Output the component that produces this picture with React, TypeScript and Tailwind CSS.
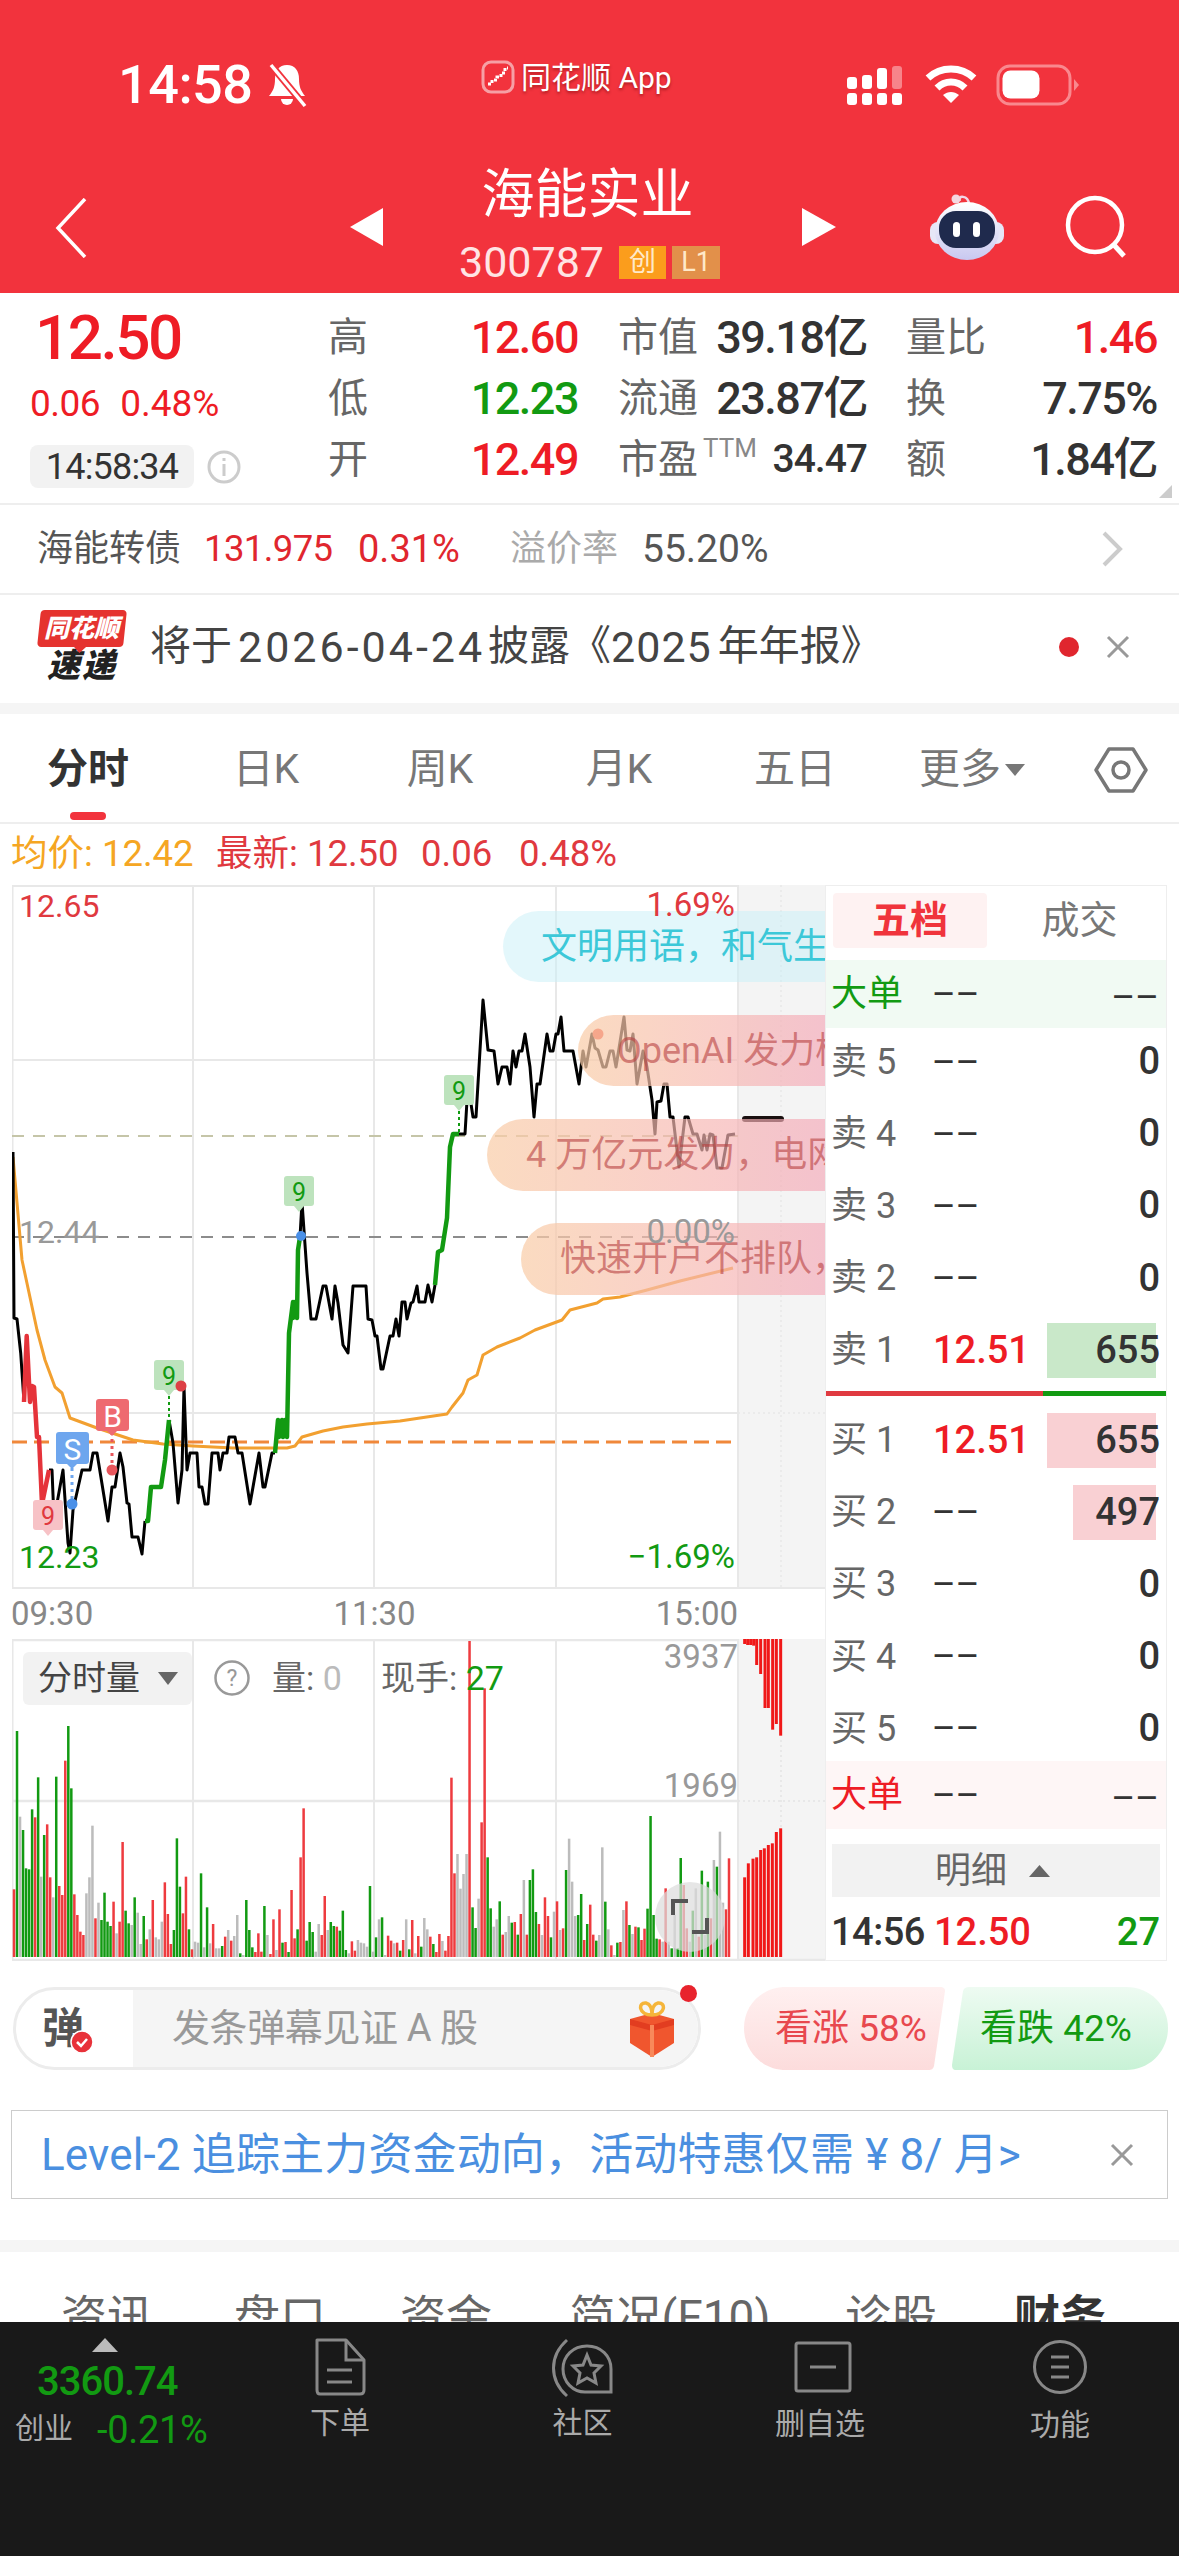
import React from "react";

const toPts = (a: number[]) => a.join(" ");

const LINE_BLACK: number[][] = [
  [13,1152,14,1318,17,1319,20.7,1353,24,1402],
  [49,1470,52,1470,54,1520,63,1470,68,1543,70,1553,73,1510,82,1470,90,1470,93,1453,97,1453,108,1521,112,1487,115,1487,120,1453,123,1467,127,1503,129,1504,132,1537,138,1537,142,1554,145,1521],
  [169,1420,173,1443,178,1503,182,1470,184,1387,187,1470,190,1453,197,1453,199,1487,202,1487,205,1504,208,1504,212,1453,218,1453,220,1470,223,1453,227,1453,229,1437,235,1437,238,1453,242,1453,250,1504,259,1453,263,1487,265,1487,272,1453,275,1453],
  [300,1237,302,1202,307,1273,311,1319,316,1319,323,1286,326,1286,332,1319,335,1286,338,1303,343,1345,348,1353,353,1286,366,1286,368,1319,372,1320,375,1336,377,1336,381,1369,383,1369,390,1336,393,1336,396,1319,399,1336,402,1302,405,1302,407,1319,411,1303,413,1302,417,1286,419,1302,420,1302,425,1302,428,1285,432,1302,435,1285],
  [459,1134,465,1134,468,1084,473,1117,476,1117,483,1000,488,1050,494,1051,498,1084,502,1067,507,1067,510,1084,513,1051,516,1067,519,1051,522,1051,525,1034,530,1067,534,1117,537,1084,540,1084,547,1034,550,1051,553,1051,556,1034,558,1034,561,1017,564,1051,573,1051,579,1084,583,1051,586,1067,592,1034,595,1048,598,1050,603,1067,606,1067,610,1051,613,1051,616,1067,624,1017,627,1050,630,1051,633,1034,637,1084,643,1051,647,1067,652,1100,655,1134,657,1102,661,1101,664,1084,667,1084,670,1117,673,1117,679,1167,685,1117,688,1117,693,1134,697,1134,702,1150,704,1135,707,1150,710,1134,713,1135,717,1168,722,1168,728,1135,735,1134],
];
const LINE_RED: number[][] = [[24,1402,26.7,1336,30,1402,32,1386,34,1387,37,1437,39,1437,42,1504,49,1470]];
const LINE_GREEN: number[][] = [
  [145,1521,148,1521,151,1487,161,1487,165,1460,169,1420],
  [275,1453,278,1420,279,1437,282,1420,283,1437,285,1420,287,1437,289,1333,293,1302,293,1318,295,1302,297,1318,298,1250,300,1237],
  [435,1285,438,1252,442,1250,447,1218,450,1147,453,1134,459,1134],
];
const AVG = [13,1157,22,1260,37,1330,45,1360,55,1387,62,1393,70,1418,97,1428,133,1440,163,1444,193,1446,233,1448,287,1448,295,1446,302,1437,323,1431,343,1427,367,1424,400,1421,420,1418,447,1414,452,1407,463,1393,468,1380,477,1375,483,1355,497,1347,520,1338,535,1330,562,1320,570,1310,597,1303,603,1299,620,1297,647,1290,680,1281,733,1268];

const VOL = "r748 g273 a530 g570 g685 g688 g508 r532 g412 a710 g585 r553 r712 a772 g410 r738 r765 r362 g258 g445 r763 r825 r875 r885 a760 a712 a557 r835 a788 g840 g758 g845 g858 r785 a880 r845 r606 g812 g850 a855 g772 a818 a912 g828 r898 a868 r780 a892 a898 a845 r727 r822 r912 g870 g595 g740 r820 r710 g868 r928 a905 a908 g700 a922 g802 a910 r852 a925 a925 g918 r890 a870 r902 a888 a825 g940 a945 g780 g870 g922 r936 r880 r935 g798 a885 r942 r838 a930 r808 g908 r906 g936 r750 r895 g868 r652 r505 g902 g846 g876 a935 a852 r885 r768 a870 g846 g858 r860 g872 g812 g930 a940 r904 r932 a900 a908 a910 a920 g738 a935 g892 a838 g832 a945 r887 r902 a910 r908 g932 r900 a838 g928 r840 a940 r888 g920 a834 a868 r890 g912 r936 r882 a903 r932 r888 r413 r700 a642 a746 a702 a642 r3 g802 g864 a776 r547 r145 g652 g805 a860 a838 g784 r884 a876 a828 g848 r846 g884 r822 a720 r884 g720 g688 g816 r852 a885 r772 r828 g892 a815 r784 a870 r865 g690 a596 a725 a828 g825 g762 r900 g852 r794 r884 g902 a885 a622 g785 a868 r916 a945 g908 r906 a810 r784 g855 a882 r860 g862 r900 r866 g806 g528 g825 g896 r898 a905 r745 a905 g925 a825 g925 g654 r735 r865 a905 g812 a745 r890 g692 a885 g725 r835 a660 g680 a575 a788 r808 r655".split(" ");
const VOLC: Record<string, string> = { r: "#ee3b3f", g: "#129a12", a: "#bcbcbc" };

const TAGS: [number, number, string, string][] = [
  [154, 1360, "#bde3bd", "#129a12"],
  [284, 1176, "#bde3bd", "#129a12"],
  [444, 1075, "#bde3bd", "#129a12"],
  [33, 1500, "#f7c2c6", "#e0393f"],
];

function PriceChart() {
  return (
    <svg viewBox="12 885 813 704" className="block w-[813px] h-[704px]">
      <rect x="738" y="885" width="87" height="704" fill="#f4f4f4" />
      <g stroke="#e8e8e8" strokeWidth="2" fill="none">
        <path d="M12.5 885V1589M193 885V1589M374 885V1589M556 885V1589M738 885V1589" />
        <path d="M12 886H738M12 1060H738M12 1413H738M12 1588H825" />
      </g>
      <path d="M781 885V1589" stroke="#e8e8e8" strokeWidth="1.5" strokeDasharray="2 3" />
      <path d="M738 1413H825" stroke="#e8e8e8" strokeWidth="1.5" strokeDasharray="2 3" />
      <path d="M12 1136H738" stroke="#c5c5a8" strokeWidth="2" strokeDasharray="12 9" />
      <path d="M12 1237H738" stroke="#8c8c8c" strokeWidth="2" strokeDasharray="12 9" />
      <path d="M12 1442H738" stroke="#f0883a" strokeWidth="3" strokeDasharray="15 7" />
      <polyline points={toPts(AVG)} fill="none" stroke="#f2a030" strokeWidth="3" strokeLinejoin="round" />
      {LINE_BLACK.map((l, i) => (
        <polyline key={i} points={toPts(l)} fill="none" stroke="#000" strokeWidth="3" strokeLinejoin="round" />
      ))}
      {LINE_RED.map((l, i) => (
        <polyline key={i} points={toPts(l)} fill="none" stroke="#e5333a" strokeWidth="4.5" strokeLinejoin="round" />
      ))}
      {LINE_GREEN.map((l, i) => (
        <polyline key={i} points={toPts(l)} fill="none" stroke="#129a12" strokeWidth="4.5" strokeLinejoin="round" />
      ))}
      <path d="M745 1119H781" stroke="#1a1010" strokeWidth="6" strokeLinecap="round" />
      {TAGS.map(([x, y, bg, fg], i) => (
        <g key={i}>
          <rect x={x} y={y} width="30" height="30" rx="3" fill={bg} />
          <path d={`M${x + 10} ${y + 30}L${x + 15} ${y + 36}L${x + 20} ${y + 30}Z`} fill={bg} />
          <text x={x + 15} y={y + 25} textAnchor="middle" fontSize="25" fontFamily="Roboto" fill={fg}>9</text>
        </g>
      ))}
      <path d="M169 1396V1420" stroke="#129a12" strokeWidth="2" strokeDasharray="3 3" />
      <path d="M459 1111V1133" stroke="#129a12" strokeWidth="2" strokeDasharray="3 3" />
      <path d="M72 1468V1500" stroke="#6ea6ee" strokeWidth="3" strokeDasharray="3 4" />
      <path d="M112 1432V1466" stroke="#e8565c" strokeWidth="3" strokeDasharray="3 4" />
      <circle cx="72" cy="1504" r="5.5" fill="#4a90e8" />
      <circle cx="112" cy="1470" r="5.5" fill="#e8565c" />
      <circle cx="181" cy="1386" r="5.5" fill="#dd3f45" />
      <circle cx="301" cy="1236" r="5" fill="#4a90e8" />
      <circle cx="598" cy="1034" r="5.5" fill="#ef4b3e" />
      <rect x="96" y="1399" width="33" height="32" rx="3" fill="#ee6a70" />
      <path d="M107 1431L112 1436L117 1431Z" fill="#ee6a70" />
      <text x="112.5" y="1427" textAnchor="middle" fontSize="30" fontFamily="Roboto" fill="#fff">B</text>
      <rect x="56" y="1432" width="33" height="32" rx="3" fill="#6ea6ee" />
      <path d="M67 1464L72 1469L77 1464Z" fill="#6ea6ee" />
      <text x="72.5" y="1460" textAnchor="middle" fontSize="30" fontFamily="Roboto" fill="#fff">S</text>
    </svg>
  );
}

function VolumeChart() {
  const topBars: [number, number][] = [[1109,15],[1118,18],[1127,18],[1136,20],[1145,78],[1157,105],[1170,207],[1180,207],[1193,272],[1204,255],[1217,290]];
  const botBars: [number, number][] = [[1109,712],[1120,670],[1134,656],[1145,652],[1157,630],[1168,625],[1180,615],[1192,610],[1204,576],[1217,565]];
  const pitch = (729 - 14) / (VOL.length - 1);
  return (
    <svg viewBox="12 1639 813 322" className="block w-[813px] h-[322px]">
      <rect x="738" y="1639" width="87" height="322" fill="#f4f4f4" />
      <g stroke="#e8e8e8" strokeWidth="2" fill="none">
        <path d="M12.5 1639V1961M193 1639V1961M374 1639V1961M556 1639V1961M738 1639V1961" />
        <path d="M12 1640H738M12 1801H738M12 1960H825" strokeWidth="2.5" />
      </g>
      <path d="M738 1801H825M781 1740V1950" stroke="#e4e4e4" strokeWidth="1.5" strokeDasharray="2 3" />
      {VOL.map((v, i) => {
        const y = 1640 + Number(v.slice(1)) / 3;
        return <rect key={i} x={14 + i * pitch - 1.25} y={y} width="2.5" height={1957 - y} fill={VOLC[v[0]]} />;
      })}
      {topBars.map(([x, h], i) => (
        <rect key={i} x={375 + x / 3 - 1.5} y="1639" width="3" height={h / 3} fill="#f01818" />
      ))}
      {botBars.map(([x, t], i) => (
        <rect key={i} x={375 + x / 3 - 1.5} y={1640 + t / 3} width="3" height={1957 - 1640 - t / 3} fill="#f01818" />
      ))}
      <circle cx="690" cy="1917" r="35" fill="#dcdcdc" fillOpacity="0.72" />
      <path d="M673 1915V1901H688M692 1932H707V1918" fill="none" stroke="#555" strokeWidth="4" />
    </svg>
  );
}

function Pill({ left, top, height, pad, cls, children }: { left: string; top: string; height: string; pad: string; cls: string; children: React.ReactNode }) {
  return (
    <div className={`absolute right-0 flex items-center whitespace-nowrap overflow-hidden rounded-l-full text-[36px] ${left} ${top} ${height} ${pad} ${cls}`}>
      {children}
    </div>
  );
}

const PINK = "bg-gradient-to-r from-[#f9cda8b8] to-[#f4a8b8a8] text-[#b8404099]";

function PriceLabels() {
  return (
    <>
      <Pill left="left-[491px]" top="top-[26px]" height="h-[71px]" pad="pl-[38px]" cls="bg-[#c8f0f880] text-[#3cc8d8]">文明用语，和气生活</Pill>
      <Pill left="left-[566px]" top="top-[130px]" height="h-[71px]" pad="pl-[39px]" cls={PINK}>OpenAI 发力榜单</Pill>
      <Pill left="left-[475px]" top="top-[234px]" height="h-[72px]" pad="pl-[39px]" cls={PINK}>4 万亿元发力，电网投资</Pill>
      <Pill left="left-[509px]" top="top-[338px]" height="h-[72px]" pad="pl-[39px]" cls={PINK}>快速开户不排队，</Pill>
      <span className="absolute left-[7px] top-[1px] leading-[40px] text-[32px] text-[#e0393f]">12.65</span>
      <span className="absolute right-[90px] top-[0px] leading-[40px] text-[33px] text-[#e0393f]">1.69%</span>
      <span className="absolute left-[7px] top-[327px] leading-[40px] text-[32px] text-[#999]">12.44</span>
      <span className="absolute right-[90px] top-[327px] leading-[40px] text-[33px] text-[#999]">0.00%</span>
      <span className="absolute left-[7px] top-[652px] leading-[40px] text-[32px] text-[#129a12]">12.23</span>
      <span className="absolute right-[90px] top-[652px] leading-[40px] text-[33px] text-[#129a12]">−1.69%</span>
    </>
  );
}

function Dash() {
  return <span className="text-[27px] font-medium text-[#333] tracking-[3px]">——</span>;
}

function BookRow({ label, price, value, bar, color }: { label: string; price: string; value: string; bar?: string; color?: string }) {
  return (
    <div className="flex items-center h-[72.1px] pl-[5px] pr-[6px] text-[36px]">
      <span className="w-[102px] text-[#666] whitespace-pre">{label}</span>
      {price === "--" ? <Dash /> : <span className="text-[38px] font-medium text-[#ee1c25]">{price}</span>}
      <span className="relative ml-auto text-[38px] text-[#333] font-medium z-0">
        {bar ? <span className={`absolute -z-10 top-[1px] bottom-[1px] right-[4px] ${bar} ${color}`} /> : null}
        {value}
      </span>
    </div>
  );
}

function BigOrder({ color, bg, cls }: { color: string; bg: string; cls: string }) {
  return (
    <div className={`flex items-center pl-[5px] pr-[6px] text-[36px] ${bg} ${cls}`}>
      <span className={`w-[102px] ${color}`}>大单</span>
      <Dash />
      <span className="ml-auto"><Dash /></span>
    </div>
  );
}

function OrderBook() {
  return (
    <div className="w-[342px] h-[1076px] border border-[#eee] flex flex-col">
      <div className="flex h-[74px] pl-[7px] pt-[7px]">
        <div className="w-[154px] h-[55px] bg-[#fef2f2] rounded-[4px] flex items-center justify-center text-[38px] font-bold text-[#f0343c]">五档</div>
        <div className="flex-1 h-[55px] flex items-center justify-center text-[38px] text-[#777] pl-[6px]">成交</div>
      </div>
      <BigOrder color="text-[#129a12]" bg="bg-[#f1faf3]" cls="h-[68px]" />
      <div className="-mt-[2px]">
        <BookRow label="卖 5" price="--" value="0" />
        <BookRow label="卖 4" price="--" value="0" />
        <BookRow label="卖 3" price="--" value="0" />
        <BookRow label="卖 2" price="--" value="0" />
        <BookRow label="卖 1" price="12.51" value="655" bar="w-[109px]" color="bg-[#c9e8c9]" />
      </div>
      <div className="flex h-[5px] mt-[5px] mb-[8px]">
        <div className="w-[217px] bg-[#e03a40]" />
        <div className="flex-1 bg-[#129a12]" />
      </div>
      <div>
        <BookRow label="买 1" price="12.51" value="655" bar="w-[109px]" color="bg-[#f9d0d3]" />
        <BookRow label="买 2" price="--" value="497" bar="w-[83px]" color="bg-[#f9d0d3]" />
        <BookRow label="买 3" price="--" value="0" />
        <BookRow label="买 4" price="--" value="0" />
        <BookRow label="买 5" price="--" value="0" />
      </div>
      <BigOrder color="text-[#ee1c25]" bg="bg-[#fef6f6]" cls="h-[68px] -mt-[3.5px]" />
      <div className="mx-[6px] mt-[15px] h-[53px] bg-[#f2f2f2] flex items-center text-[36px] text-[#666]">
        <span className="ml-[103px]">明细</span>
        <svg className="ml-[22px]" width="21" height="12" viewBox="0 0 21 12"><path d="M10.5 0L21 12H0Z" fill="#666" /></svg>
      </div>
      <div className="flex items-center h-[63px] pt-[8px] pl-[5px] pr-[6px] text-[38px] font-medium">
        <span className="w-[103px] text-[#333] tracking-[-0.5px]">14:56</span>
        <span className="text-[#ee1c25]">12.50</span>
        <span className="ml-auto text-[#129a12]">27</span>
      </div>
    </div>
  );
}

function Cell({ label, value, color, w, ml }: { label: React.ReactNode; value: string; color: string; w: string; ml: string }) {
  return (
    <div className={`flex items-center justify-between ${w} ${ml}`}>
      <span className="text-[40px] text-[#666] whitespace-nowrap">{label}</span>
      <span className={`text-[45px] font-medium tracking-[-1.5px] whitespace-nowrap ${color}`}>{value}</span>
    </div>
  );
}

function QuoteRow({ a, b, c }: { a: [string, string, string]; b: [React.ReactNode, string]; c: [string, string, string] }) {
  return (
    <div className="flex h-[61px] items-center">
      <Cell label={a[0]} value={a[1]} color={a[2]} w="w-[250px]" ml="" />
      <Cell label={b[0]} value={b[1]} color="text-[#333]" w="w-[249px]" ml="ml-[40px]" />
      <Cell label={c[0]} value={c[1]} color={c[2]} w="w-[251px]" ml="ml-[39px]" />
    </div>
  );
}

function NavIcon({ children, cell }: { children: React.ReactNode; cell: string }) {
  return <div className={`flex flex-col items-center ${cell}`}>{children}</div>;
}

export default function App() {
  return (
    <div className="relative w-[1179px] h-[2556px] overflow-hidden flex flex-col bg-white font-[Roboto,'Noto_Sans_CJK_SC',sans-serif]">
      {/* Red header */}
      <div className="h-[293px] shrink-0 bg-[#f2333d] text-white">
        <div className="flex items-center h-[170px]">
          <span className="ml-[118px] w-[147px] text-[54px] font-medium leading-none tracking-[-0.5px]">14:58</span>
          <svg width="44" height="46" viewBox="0 0 44 46">
            <path d="M22 3c-8 0-12 6-12 14 0 8-2 12-6 17h36c-4-5-6-9-6-17 0-8-4-14-12-14z" fill="#fff" />
            <path d="M16 37a6 6 0 0 0 12 0z" fill="#fff" />
            <path d="M6 3L40 44" stroke="#f2333d" strokeWidth="7" />
            <path d="M6 3L40 44" stroke="#fff" strokeWidth="3.5" />
          </svg>
          <svg className="ml-[172px] -mt-[16px]" width="34" height="34" viewBox="0 0 34 34">
            <rect x="2" y="2" width="30" height="30" rx="8" fill="#f2333d" stroke="#f6a0a5" strokeWidth="3" />
            <path d="M7 24h4v-4h5v-3h4v-4h4v-5h3" fill="none" stroke="#fff" strokeWidth="3" strokeDasharray="3 2" />
          </svg>
          <span className="ml-[6px] -mt-[16px] text-[30px] text-[#fff] [text-shadow:0_2px_3px_rgba(90,0,0,0.45)] whitespace-nowrap">同花顺 App</span>
          <svg className="ml-[175px]" width="62" height="42" viewBox="0 0 62 42" fill="#fff">
            <rect x="0" y="13" width="10" height="12" rx="3" />
            <rect x="15" y="11" width="10" height="14" rx="3" />
            <rect x="30" y="4" width="10" height="21" rx="3" />
            <rect x="45" y="2" width="10" height="23" rx="3" fillOpacity="0.4" />
            <rect x="0" y="29" width="10" height="12" rx="3" />
            <rect x="15" y="29" width="10" height="12" rx="3" />
            <rect x="30" y="29" width="10" height="12" rx="3" />
            <rect x="45" y="29" width="10" height="12" rx="3" />
          </svg>
          <svg className="ml-[16px]" width="52" height="40" viewBox="0 0 52 40" fill="none" stroke="#fff" strokeWidth="7">
            <path d="M3 13C16 1 36 1 49 13" />
            <path d="M12 23C20 15 32 15 40 23" />
            <path d="M26 38L18 30C23 26 29 26 34 30Z" fill="#fff" stroke="none" />
          </svg>
          <svg className="ml-[19px]" width="84" height="42" viewBox="0 0 84 42">
            <rect x="2" y="2" width="72" height="38" rx="12" fill="none" stroke="#f9888e" strokeWidth="3" />
            <rect x="6.5" y="6.5" width="37" height="28" rx="8" fill="#fff" />
            <path d="M78 15L83 21L78 27Z" fill="#f9888e" />
          </svg>
        </div>
        <div className="flex items-start h-[123px]">
          <svg className="ml-[55px] mt-[28px]" width="32" height="60" viewBox="0 0 32 60" fill="none" stroke="#fff" strokeWidth="3.5"><path d="M30 1L3 30L30 59" /></svg>
          <svg className="ml-[263px] mt-[38px]" width="33" height="38" viewBox="0 0 33 38"><path d="M33 0V38L0 19Z" fill="#fff" /></svg>
          <div className="ml-[6px] w-[401px] flex flex-col items-center">
            <div className="h-[50px] leading-[50px] text-[53px] -ml-[4px]">海能实业</div>
            <div className="mt-[22px] h-[40px] flex items-center">
              <span className="text-[43px] text-[#ffe4e4]">300787</span>
              <span className="ml-[15px] w-[47px] h-[33px] bg-[#fb9d1c] flex items-center justify-center text-[27px] text-[#ffe9c9]">创</span>
              <span className="ml-[6px] w-[48px] h-[33px] bg-[#e2904a] flex items-center justify-center text-[27px] text-[#ffe9c9]">L1</span>
            </div>
          </div>
          <svg className="ml-[12px] mt-[38px]" width="34" height="38" viewBox="0 0 34 38"><path d="M0 0V38L34 19Z" fill="#fff" /></svg>
          <svg className="ml-[94px] mt-[22px]" width="74" height="68" viewBox="0 0 74 68">
            <defs>
              <linearGradient id="rb" x1="0" y1="0" x2="0" y2="1"><stop offset="0" stopColor="#fff" /><stop offset="1" stopColor="#c8c8f0" /></linearGradient>
            </defs>
            <path d="M30 9c-3-6 8-6 9 3" fill="none" stroke="#f2d6e6" strokeWidth="2.5" />
            <circle cx="26" cy="7" r="4.5" fill="#f4d6e0" />
            <rect x="0" y="30" width="74" height="22" rx="8" fill="#e6e6f7" />
            <ellipse cx="37" cy="39" rx="32" ry="29" fill="url(#rb)" />
            <rect x="9" y="19" width="56" height="37" rx="17" fill="#1f2a4d" />
            <rect x="23" y="30" width="7" height="15" rx="3.5" fill="#fff" />
            <rect x="43" y="30" width="7" height="15" rx="3.5" fill="#fff" />
          </svg>
          <svg className="ml-[61px] mt-[25px]" width="64" height="64" viewBox="0 0 64 64" fill="none" stroke="#fff" strokeWidth="4.5">
            <circle cx="30" cy="30" r="27" />
            <path d="M49 50L59 61" strokeWidth="5" />
          </svg>
        </div>
      </div>

      {/* Quote block */}
      <div className="relative flex h-[210px] shrink-0">
        <div className="w-[328px] pl-[30px] pt-[13px]">
          <div className="pl-[5px] text-[62px] leading-[64px] font-medium text-[#ee1c25] tracking-[-2.5px]">12.50</div>
          <div className="mt-[14px] flex gap-[20px] text-[37px] leading-[40px] text-[#ee1c25]">
            <span className="tracking-[-0.5px]">0.06</span>
            <span>0.48%</span>
          </div>
          <div className="mt-[21px] flex items-center">
            <span className="w-[164px] h-[43px] rounded-[8px] bg-[#f2f2f2] flex items-center justify-center text-[36px] text-[#333] tracking-[-0.8px]">14:58:34</span>
            <svg className="ml-[13px]" width="34" height="34" viewBox="0 0 34 34" fill="none" stroke="#ccc" strokeWidth="3"><circle cx="17" cy="17" r="15" /><path d="M17 14V26M17 8V11" /></svg>
          </div>
        </div>
        <div className="pt-[14px]">
          <QuoteRow a={["高", "12.60", "text-[#ee1c25]"]} b={["市值", "39.18亿"]} c={["量比", "1.46", "text-[#ee1c25]"]} />
          <QuoteRow a={["低", "12.23", "text-[#129a12]"]} b={["流通", "23.87亿"]} c={["换", "7.75%", "text-[#333]"]} />
          <div className="flex h-[61px] items-center">
            <Cell label="开" value="12.49" color="text-[#ee1c25]" w="w-[250px]" ml="" />
            <div className="ml-[40px] w-[249px] flex items-center justify-between">
              <span className="flex items-start text-[40px] text-[#666]">市盈<span className="ml-[5px] text-[26px] leading-[36px] text-[#888]">TTM</span></span>
              <span className="text-[39px] font-medium text-[#333] tracking-[-1px]">34.47</span>
            </div>
            <Cell label="额" value="1.84亿" color="text-[#333]" w="w-[251px]" ml="ml-[39px]" />
          </div>
        </div>
        <svg className="absolute right-[7px] bottom-[5px]" width="13" height="13" viewBox="0 0 13 13"><path d="M13 0V13H0Z" fill="#ccc" /></svg>
      </div>

      <div className="h-[92px] shrink-0 border-y-2 border-[#eee] flex items-center pl-[37px] text-[38px] whitespace-nowrap">
        <span className="w-[167px] text-[36px] text-[#555]">海能转债</span>
        <span className="w-[154px] text-[36.5px] text-[#e0262e] tracking-[-0.6px]">131.975</span>
        <span className="w-[152px] text-[#e0262e]">0.31%</span>
        <span className="w-[132px] text-[36px] text-[#aaa]">溢价率</span>
        <span className="text-[39px] text-[#555]">55.20%</span>
        <svg className="ml-auto mr-[56px]" width="22" height="36" viewBox="0 0 22 36" fill="none" stroke="#ccc" strokeWidth="4"><path d="M3 2L19 18L3 34" /></svg>
      </div>

      <div className="h-[108px] shrink-0 flex items-center pl-[38px] pb-[4px] whitespace-nowrap">
        <div className="w-[88px] flex flex-col items-center">
          <div className="relative w-[86px] h-[37px] bg-[#e5332f] rounded-[4px] -skew-x-6 flex items-center justify-center">
            <span className="text-[25px] font-black italic text-white leading-none skew-x-6">同花顺</span>
            <span className="absolute left-[36px] top-[36px] w-0 h-0 border-x-[7px] border-x-transparent border-t-[7px] border-t-[#e5332f]" />
          </div>
          <span className="mt-[1px] text-[33px] leading-[36px] font-black italic text-[#222] tracking-[2px]">速递</span>
        </div>
        <span className="ml-[24px] text-[41px] text-[#444] flex items-center">
          将于<span className="ml-[6px] text-[43px] tracking-[3px]">2026-04-24</span><span className="ml-[3px]">披露《</span><span className="text-[43px] tracking-[1px]">2025</span><span className="ml-[6px]">年年报》</span>
        </span>
        <span className="ml-auto w-[20px] h-[20px] rounded-full bg-[#e0262e]" />
        <svg className="ml-[27px] mr-[49px]" width="24" height="24" viewBox="0 0 24 24" fill="none" stroke="#999" strokeWidth="3"><path d="M2 2L22 22M22 2L2 22" /></svg>
      </div>

      <div className="h-[11px] shrink-0 bg-[#f5f5f5]" />

      {/* Tabs */}
      <div className="h-[110px] shrink-0 border-b-2 border-[#eee] flex items-center text-[41px] text-[#777] pt-[4px]">
        <div className="relative w-[176px] h-full flex items-center justify-center font-bold text-[#333]">
          分时
          <span className="absolute left-[70px] bottom-[2px] w-[36px] h-[8px] rounded-full bg-[#f2333d]" />
        </div>
        <div className="w-[180px] text-center">日K</div>
        <div className="w-[168px] text-center">周K</div>
        <div className="w-[190px] text-center">月K</div>
        <div className="w-[162px] text-center">五日</div>
        <div className="w-[192px] flex items-center justify-center">
          更多
          <svg className="ml-[4px]" width="20" height="12" viewBox="0 0 20 12"><path d="M0 0H20L10 12Z" fill="#777" /></svg>
        </div>
        <div className="flex-1 flex justify-center pr-[6px]">
          <svg width="54" height="48" viewBox="0 0 54 48" fill="none" stroke="#777" strokeWidth="3.5">
            <path d="M15 3H39L52 24L39 45H15L2 24Z" strokeLinejoin="round" />
            <circle cx="27" cy="24" r="8" />
          </svg>
        </div>
      </div>

      <div className="h-[61px] shrink-0 flex items-center pl-[11px] text-[36.5px] whitespace-nowrap">
        <span className="w-[205px] text-[#f5a623]">均价: 12.42</span>
        <span className="w-[205px] text-[#e0393f]">最新: 12.50</span>
        <span className="w-[98px] text-[#e0393f]">0.06</span>
        <span className="text-[#e0393f]">0.48%</span>
      </div>

      {/* Chart + order book */}
      <div className="flex pl-[12px] shrink-0">
        <div className="w-[813px] flex flex-col">
          <div className="relative w-[813px] h-[704px] overflow-hidden">
            <PriceChart />
            <PriceLabels />
          </div>
          <div className="h-[50px] w-[727px] -ml-[1px] flex items-center justify-between text-[33px] text-[#888]">
            <span>09:30</span>
            <span>11:30</span>
            <span>15:00</span>
          </div>
          <div className="relative w-[813px] h-[322px]">
            <VolumeChart />
            <div className="absolute left-[11px] top-[13px] w-[169px] h-[53px] rounded-[6px] bg-[#f2f2f2] flex items-center pl-[15px] text-[34px] text-[#444]">
              分时量
              <svg className="ml-[18px]" width="20" height="13" viewBox="0 0 20 13"><path d="M0 0H20L10 13Z" fill="#666" /></svg>
            </div>
            <svg className="absolute left-[202px] top-[21px]" width="36" height="36" viewBox="0 0 36 36" fill="none" stroke="#999" strokeWidth="2.5">
              <circle cx="18" cy="18" r="16.5" />
              <text x="18" y="26" textAnchor="middle" fontSize="23" fontFamily="Roboto" fill="#999" stroke="none">?</text>
            </svg>
            <span className="absolute left-[260px] top-[19px] leading-[40px] text-[34px] text-[#666]">量: <span className="text-[#bbb]">0</span></span>
            <span className="absolute left-[369px] top-[19px] leading-[40px] text-[34px] text-[#666]">现手: <span className="text-[#129a12]">27</span></span>
            <span className="absolute right-[87px] top-[-2px] leading-[40px] text-[33px] text-[#999]">3937</span>
            <span className="absolute right-[87px] top-[127px] leading-[40px] text-[33px] text-[#999]">1969</span>
          </div>
        </div>
        <OrderBook />
      </div>

      {/* Danmu */}
      <div className="mt-[26px] h-[83px] shrink-0 flex pl-[13px]">
        <div className="relative w-[688px] h-[83px] rounded-full border-[3px] border-[#ececec] flex">
          <div className="w-[117px] flex items-center pl-[26px]">
            <span className="relative text-[42px] font-bold text-[#555] leading-none">
              弹
              <svg className="absolute left-[28px] top-[22px]" width="24" height="24" viewBox="0 0 24 24">
                <circle cx="12" cy="12" r="11" fill="#e8323a" stroke="#fff" strokeWidth="1.5" />
                <path d="M7 12L11 16L17 9" fill="none" stroke="#fff" strokeWidth="2.5" />
              </svg>
            </span>
          </div>
          <div className="flex-1 bg-[#f5f5f5] rounded-r-full flex items-center pl-[39px] text-[38px] text-[#999] whitespace-nowrap tracking-[-0.4px]">
            发条弹幕见证 A 股
            <svg className="ml-auto mr-[20px]" width="52" height="56" viewBox="0 0 52 56">
              <path d="M4 18L26 12L48 18V42L26 56L4 42Z" fill="#f0562e" />
              <path d="M4 18L26 24L48 18V24L26 30L4 24Z" fill="#e23d20" />
              <path d="M26 24V56" stroke="#f8895a" strokeWidth="4" />
              <path d="M26 14C12 14 12 1 20 2C25 3 26 9 26 14C26 9 27 3 32 2C40 1 40 14 26 14Z" fill="none" stroke="#f5b53a" strokeWidth="3.5" />
            </svg>
          </div>
          <span className="absolute right-[1px] top-[-5px] w-[17px] h-[17px] rounded-full bg-[#e8232d]" />
        </div>
        <div className="relative ml-[43px] w-[201px] h-[83px] flex items-center pl-[31px] text-[37px] text-[#e8484e] whitespace-nowrap">
          <svg className="absolute inset-0" width="201" height="83" viewBox="0 0 201 83">
            <defs><linearGradient id="up" x1="0" y1="0" x2="0" y2="1"><stop offset="0" stopColor="#fff0f0" /><stop offset="1" stopColor="#fcdcdc" /></linearGradient></defs>
            <path d="M42 0H196C200 0 201 2 201 4L190 79C189 82 188 83 184 83H42C18 83 0 64 0 41C0 18 18 0 42 0Z" fill="url(#up)" />
          </svg>
          <span className="relative">看涨 58%</span>
        </div>
        <div className="relative ml-[7px] w-[216px] h-[83px] flex items-center pl-[28px] text-[37px] text-[#129a12] whitespace-nowrap">
          <svg className="absolute inset-0" width="216" height="83" viewBox="0 0 216 83">
            <defs><linearGradient id="dn" x1="0" y1="0" x2="0" y2="1"><stop offset="0" stopColor="#eefbf2" /><stop offset="1" stopColor="#c8f2d6" /></linearGradient></defs>
            <path d="M17 0H174C198 0 216 18 216 41C216 64 198 83 174 83H4C1 83 0 81 0 78L11 4C12 1 14 0 17 0Z" fill="url(#dn)" />
          </svg>
          <span className="relative">看跌 42%</span>
        </div>
      </div>

      {/* Level-2 banner */}
      <div className="mt-[40px] mx-[11px] h-[89px] shrink-0 border border-[#ccc] flex items-center pl-[29px] text-[44px] text-[#4a8fe0] whitespace-nowrap tracking-[0.15px]">
        Level-2 追踪主力资金动向，活动特惠仅需 ¥ 8/ 月&gt;
        <svg className="ml-auto mr-[33px]" width="24" height="24" viewBox="0 0 24 24" fill="none" stroke="#999" strokeWidth="3"><path d="M2 2L22 22M22 2L2 22" /></svg>
      </div>

      <div className="mt-[41px] h-[12px] shrink-0 bg-[#f5f5f5]" />

      {/* Lower tabs, cut by bottom bar */}
      <div className="h-[70px] shrink-0 overflow-hidden text-[46px] leading-[60px] text-[#666] whitespace-nowrap flex pt-[35px]">
        <span className="w-[214px] text-center">资讯</span>
        <span className="w-[132px] text-center">盘口</span>
        <span className="w-[200px] text-center">资金</span>
        <span className="w-[248px] text-center">简况(F10)</span>
        <span className="w-[194px] text-center">诊股</span>
        <span className="w-[144px] text-center font-bold text-[#333]">财务</span>
      </div>

      {/* Bottom bar */}
      <div className="flex-1 bg-[#191919] flex items-start text-[#aaa]">
        <div className="w-[225px] pt-[16px] pl-[15px]">
          <svg className="ml-[77px]" width="26" height="14" viewBox="0 0 26 14"><path d="M13 0L26 14H0Z" fill="#bbb" /></svg>
          <div className="ml-[22px] mt-[7px] text-[40px] leading-[46px] font-medium text-[#129a12] tracking-[-1px]">3360.74</div>
          <div className="mt-[2px] flex items-center h-[46px]">
            <span className="text-[29px]">创业</span>
            <span className="ml-[24px] text-[38px] text-[#129a12] tracking-[-0.3px]">-0.21%</span>
          </div>
        </div>
        <NavIcon cell="w-[230px] pt-[16px]">
          <svg width="52" height="58" viewBox="0 0 52 58" fill="none" stroke="#888" strokeWidth="3">
            <path d="M3 2H32L50 22V52Q50 56 46 56H6Q3 56 3 52Z" strokeLinejoin="round" />
            <path d="M32 2V22H50M13 32H38M13 44H38" />
          </svg>
          <span className="mt-[7px] text-[30px] leading-[40px]">下单</span>
        </NavIcon>
        <NavIcon cell="w-[255px] pt-[16px]">
          <svg width="64" height="60" viewBox="0 0 64 60" fill="none" stroke="#888" strokeWidth="3">
            <path d="M16 2C-2 18 -2 42 16 58" />
            <path d="M60 54H34C22 54 12 44 12 31C12 18 22 8 36 8C50 8 60 18 60 31Z" />
            <path d="M36 17L40 27L50 28L43 35L45 45L36 40L27 45L29 35L22 28L32 27Z" />
          </svg>
          <span className="mt-[5px] text-[30px] leading-[40px]">社区</span>
        </NavIcon>
        <NavIcon cell="w-[220px] pt-[19px]">
          <svg className="ml-[6px]" width="58" height="52" viewBox="0 0 58 52" fill="none" stroke="#888" strokeWidth="3">
            <rect x="2" y="2" width="54" height="48" rx="2" />
            <path d="M16 26H42" />
          </svg>
          <span className="mt-[11px] text-[30px] leading-[40px]">删自选</span>
        </NavIcon>
        <NavIcon cell="flex-1 pt-[18px] pl-[11px]">
          <svg width="56" height="54" viewBox="0 0 56 54" fill="none" stroke="#888" strokeWidth="3">
            <circle cx="28" cy="27" r="25.5" />
            <path d="M19 17H37M19 27H37M19 37H37" />
          </svg>
          <span className="mt-[11px] text-[30px] leading-[40px]">功能</span>
        </NavIcon>
      </div>
    </div>
  );
}
